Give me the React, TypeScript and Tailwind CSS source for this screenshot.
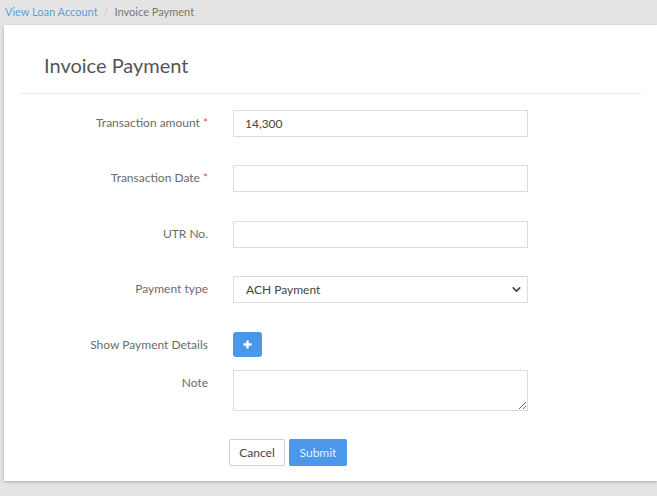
import { ChevronDown } from 'lucide-react';

const font = { fontFamily: 'Lato, "Open Sans", sans-serif' };

function Label({ text, required }: { text: string; required?: boolean }) {
  return (
    <div className="w-[205px] shrink-0 pr-[1px] pt-[6px] text-right text-[12px] leading-[14px] text-[#6b6b6b]">
      {text}
      {required && <span className="ml-[3px] text-[#e05a5a]">*</span>}
    </div>
  );
}

export default function App() {
  return (
    <div className="min-h-[496px] bg-[#e4e4e4] text-[#555]" style={font}>
      {/* Breadcrumb */}
      <div className="flex h-[25px] items-center px-[5px] text-[11px]">
        <a href="#" className="text-[#5a9fe6]">View Loan Account</a>
        <span className="mx-[6px] text-[#c8c8c8]">/</span>
        <span className="text-[#777]">Invoice Payment</span>
      </div>

      {/* Card */}
      <div className="ml-[4px] h-[456px] bg-white shadow-[0_1px_3px_rgba(0,0,0,0.25)]">
        <div className="mx-[16px] border-b border-[#ececec] pb-[15px] pl-[24px] pt-[27px]">
          <h1 className="text-[20px] leading-[26px] text-[#555]">Invoice Payment</h1>
        </div>

        <form className="pt-[16px]">
          <div className="flex gap-[24px]">
            <Label text="Transaction amount" required />
            <input
              defaultValue="14,300"
              className="block h-[27px] w-[295px] border border-[#dcdcdc] px-[11px] text-[12px] text-[#444] outline-none"
            />
          </div>

          <div className="mt-[28px] flex gap-[24px]">
            <Label text="Transaction Date" required />
            <input className="block h-[27px] w-[295px] border border-[#dcdcdc] px-[11px] text-[12px] outline-none" />
          </div>

          <div className="mt-[29px] flex gap-[24px]">
            <Label text="UTR No." />
            <input className="block h-[27px] w-[295px] border border-[#dcdcdc] px-[11px] text-[12px] outline-none" />
          </div>

          <div className="mt-[28px] flex gap-[24px]">
            <Label text="Payment type" />
            <div className="relative w-[295px]">
              <select className="block h-[27px] w-full appearance-none border border-[#dcdcdc] bg-white px-[12px] text-[12px] text-[#444] outline-none">
                <option>ACH Payment</option>
              </select>
              <ChevronDown
                size={13}
                strokeWidth={3}
                className="pointer-events-none absolute right-[5px] top-[7px] text-[#444]"
              />
            </div>
          </div>

          <div className="mt-[29px] flex gap-[24px]">
            <Label text="Show Payment Details" />
            <button
              type="button"
              className="flex h-[25px] w-[29px] items-center justify-center rounded-[3px] bg-[#4b98ea]"
            >
              <svg width="9" height="9" viewBox="0 0 9 9">
                <path d="M4.5 0.5v8M0.5 4.5h8" stroke="#fff" strokeWidth="2.4" />
              </svg>
            </button>
          </div>

          <div className="mt-[13px] flex gap-[24px]">
            <Label text="Note" />
            <textarea className="block h-[41px] w-[295px] border border-[#dcdcdc] px-[11px] py-[5px] text-[12px] outline-none" />
          </div>

          <div className="mt-[28px] flex gap-[4px] pl-[225px]">
            <button
              type="button"
              className="h-[27px] w-[56px] rounded-[2px] border border-[#cfcfcf] bg-white text-[12px] text-[#444]"
            >
              Cancel
            </button>
            <button
              type="submit"
              className="h-[27px] w-[58px] rounded-[2px] bg-[#4b98ea] text-[12px] text-[#e6f0fc]"
            >
              Submit
            </button>
          </div>
        </form>
      </div>
    </div>
  );
}
